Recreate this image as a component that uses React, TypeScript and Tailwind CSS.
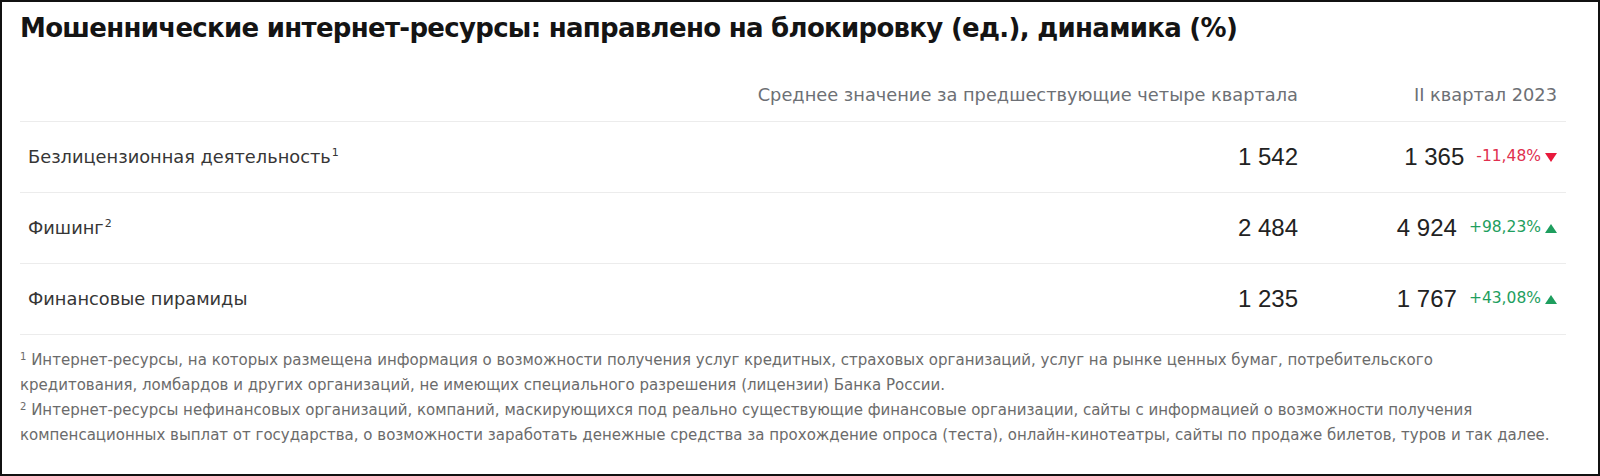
import React from "react";

const rows = [
  { label: "Безлицензионная деятельность", sup: "1", avg: "1 542", cur: "1 365", pct: "-11,48%", up: false },
  { label: "Фишинг", sup: "2", avg: "2 484", cur: "4 924", pct: "+98,23%", up: true },
  { label: "Финансовые пирамиды", sup: "", avg: "1 235", cur: "1 767", pct: "+43,08%", up: true },
];

function Tri({ up }: { up: boolean }) {
  return (
    <svg width="12" height="9" viewBox="0 0 12 9" className="ml-[4px]">
      {up ? <polygon points="6,0 12,9 0,9" fill="#1e9e5e" /> : <polygon points="0,0 12,0 6,9" fill="#e8193c" />}
    </svg>
  );
}

export default function App() {
  return (
    <div className="w-[1600px] h-[476px] border-2 border-[#111] bg-white pl-[18px] pr-[32px] font-['DejaVu_Sans',sans-serif]">
      <h1 className="mt-[8px] text-[26px] leading-[36px] font-bold text-[#141414] tracking-[-0.7px]">
        Мошеннические интернет-ресурсы: направлено на блокировку (ед.), динамика (%)
      </h1>
      <div className="mt-[31px] flex items-center h-[36px] text-[17.8px] text-[#6d7075]">
        <div className="flex-1" />
        <div className="w-[560px] text-right">Среднее значение за предшествующие четыре квартала</div>
        <div className="w-[268px] text-right pr-[9px]">II квартал 2023</div>
      </div>
      <div className="mt-[8px] border-t border-[#ececec]">
        {rows.map((r) => (
          <div key={r.label} className="flex items-center h-[71px] border-b border-[#ececec]">
            <div className="flex-1 pl-[8px] text-[17.8px] text-[#363636]">
              {r.label}
              {r.sup && <span className="relative top-[-7px] text-[11px] ml-[1px] leading-none">{r.sup}</span>}
            </div>
            <div className="w-[560px] text-right text-[24px] text-[#222] font-['Liberation_Sans',sans-serif]">{r.avg}</div>
            <div className="w-[268px] flex items-center justify-end pr-[9px]">
              <span className="text-[24px] text-[#222] font-['Liberation_Sans',sans-serif]">{r.cur}</span>
              <span className={`ml-[12px] text-[15.5px] ${r.up ? "text-[#1e9e5e]" : "text-[#e0304f]"}`}>{r.pct}</span>
              <Tri up={r.up} />
            </div>
          </div>
        ))}
      </div>
      <div className="mt-[13px] text-[15px] leading-[25px] text-[#6b6b6b]">
        <p>
          <span className="relative top-[-5px] text-[10px] leading-none">1</span> Интернет-ресурсы, на которых размещена информация о возможности получения услуг кредитных, страховых организаций, услуг на рынке ценных бумаг, потребительского
          <br />
          кредитования, ломбардов и других организаций, не имеющих специального разрешения (лицензии) Банка России.
        </p>
        <p>
          <span className="relative top-[-5px] text-[10px] leading-none">2</span> Интернет-ресурсы нефинансовых организаций, компаний, маскирующихся под реально существующие финансовые организации, сайты с информацией о возможности получения
          <br />
          компенсационных выплат от государства, о возможности заработать денежные средства за прохождение опроса (теста), онлайн-кинотеатры, сайты по продаже билетов, туров и так далее.
        </p>
      </div>
    </div>
  );
}
